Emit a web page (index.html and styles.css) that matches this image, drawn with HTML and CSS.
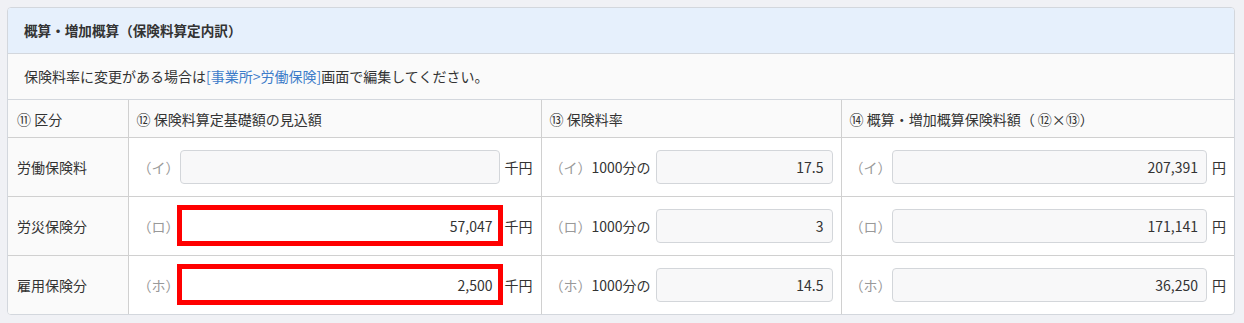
FILE: index.html
```html
<!DOCTYPE html>
<html lang="ja">
<head>
    <meta charset="UTF-8">
    <title>概算・増加概算（保険料算定内訳）</title>
    <link rel="stylesheet" href="styles.css">
</head>
<body>
    <div class="card">
        <div class="card-title">概算・増加概算（保険料算定内訳）</div>
        <div class="notice">保険料率に変更がある場合は<span class="link">[事業所&gt;労働保険]</span>画面で編集してください。</div>

        <table class="grid">
            <colgroup>
                <col class="c1">
                <col class="c2">
                <col class="c3">
                <col class="c4">
            </colgroup>
            <thead>
                <tr>
                    <th>⑪ 区分</th>
                    <th>⑫ 保険料算定基礎額の見込額</th>
                    <th>⑬ 保険料率</th>
                    <th>⑭ 概算・増加概算保険料額（ ⑫×⑬）</th>
                </tr>
            </thead>
            <tbody>
                <tr>
                    <td class="kind">労働保険料</td>
                    <td><div class="field"><span class="lbl">（イ）</span><input class="box" type="text" value="" readonly><span class="unit">千円</span></div></td>
                    <td><div class="field"><span class="lbl">（イ）</span><span class="pre">1000分の</span><input class="box" type="text" value="17.5" readonly></div></td>
                    <td><div class="field"><span class="lbl">（イ）</span><input class="box" type="text" value="207,391" readonly><span class="unit">円</span></div></td>
                </tr>
                <tr>
                    <td class="kind">労災保険分</td>
                    <td><div class="field"><span class="lbl">（ロ）</span><input class="box marked" type="text" value="57,047"><span class="unit">千円</span></div></td>
                    <td><div class="field"><span class="lbl">（ロ）</span><span class="pre">1000分の</span><input class="box" type="text" value="3" readonly></div></td>
                    <td><div class="field"><span class="lbl">（ロ）</span><input class="box" type="text" value="171,141" readonly><span class="unit">円</span></div></td>
                </tr>
                <tr>
                    <td class="kind">雇用保険分</td>
                    <td><div class="field"><span class="lbl">（ホ）</span><input class="box marked" type="text" value="2,500"><span class="unit">千円</span></div></td>
                    <td><div class="field"><span class="lbl">（ホ）</span><span class="pre">1000分の</span><input class="box" type="text" value="14.5" readonly></div></td>
                    <td><div class="field"><span class="lbl">（ホ）</span><input class="box" type="text" value="36,250" readonly><span class="unit">円</span></div></td>
                </tr>
            </tbody>
        </table>
    </div>
</body>
</html>
```

FILE: styles.css
```css
body {
    font-family: "Noto Sans CJK JP", "Noto Sans", sans-serif;
    font-size: 14px;
    color: #333;
    background-color: #f0f1f5;
    margin: 0;
    padding: 7px 9px 9px 7px;
}

.card {
    background: white;
    border: 1px solid #d3d7dd;
    border-radius: 4px;
    overflow: hidden;
}

.card-title {
    background-color: #e6f0fc;
    height: 45px;
    line-height: 45px;
    padding: 0 16px;
    font-weight: bold;
    font-size: 13.6px;
    border-bottom: 1px solid #d3d7dd;
}

.notice {
    background-color: #fafafa;
    height: 45px;
    line-height: 45px;
    padding: 0 16px;
    border-bottom: 1px solid #d3d7dd;
}

.link {
    color: #3d7cc9;
}

.grid {
    width: 100%;
    border-collapse: collapse;
    table-layout: fixed;
}

.c1 { width: 120px; }
.c2 { width: 413px; }
.c3 { width: 300px; }
.c4 { width: auto; }

.grid th,
.grid td {
    border-left: 1px solid #d0d0d0;
    border-top: 1px solid #d0d0d0;
    padding: 0 8px;
    text-align: left;
    font-weight: normal;
}

.grid tr > :first-child {
    border-left: none;
    padding-left: 9px;
}

.grid thead tr:first-child th {
    border-top: none;
    height: 37px;
    background-color: #fafafa;
}

.grid td {
    height: 58px;
}

.grid td:nth-child(2) {
    padding-left: 9px;
}

.grid td.kind {
    background-color: #fafafa;
}

.field {
    display: flex;
    align-items: center;
}

.lbl {
    color: #999;
    width: 42px;
    flex: none;
}

.pre {
    margin-right: 5px;
    flex: none;
}

.unit {
    margin-left: 5px;
    flex: none;
}

.box {
    flex: 1;
    min-width: 0;
    height: 34px;
    box-sizing: border-box;
    border: 1px solid #d3d6da;
    border-radius: 4px;
    background-color: #f8f8f9;
    padding: 0 8px;
    text-align: right;
    font-family: inherit;
    font-size: 14px;
    color: #333;
}

.box.marked {
    background-color: white;
    border: 5px solid #ff0000;
    border-radius: 0;
    height: 41px;
    margin: -4px -3px -3px -3px;
    padding: 0 5px;
    outline: none;
}
```
